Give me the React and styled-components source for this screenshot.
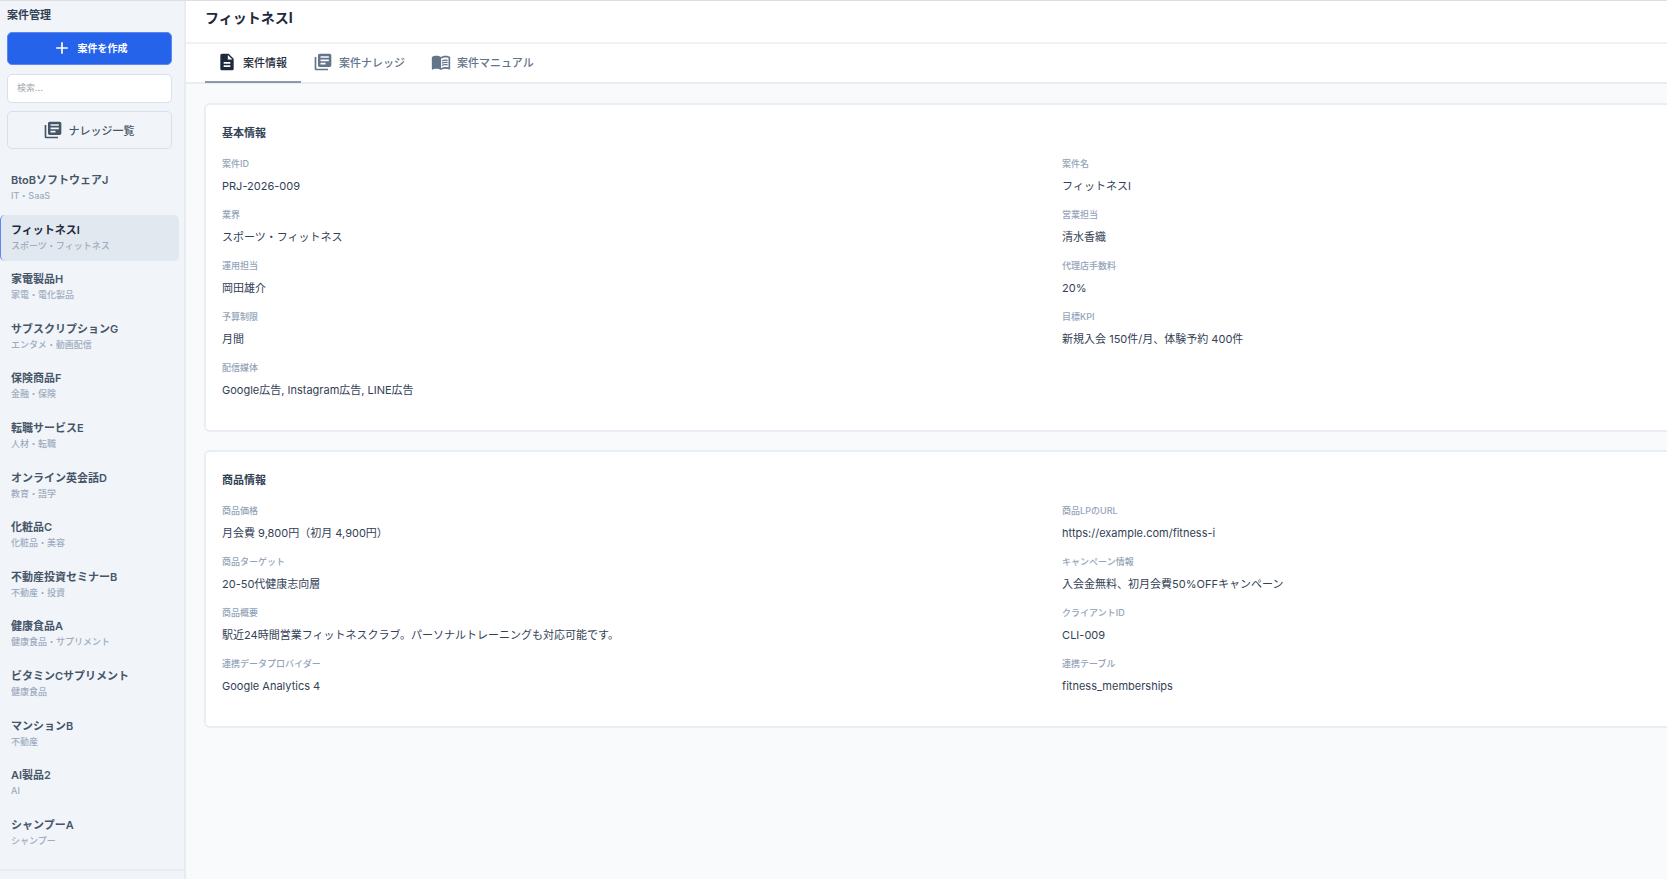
import styled, { createGlobalStyle } from "styled-components";
import {
  MdAdd,
  MdDescription,
  MdLibraryBooks,
  MdMenuBook,
} from "react-icons/md";

const GlobalStyle = createGlobalStyle`
  * {
    box-sizing: border-box;
  }

  body {
    margin: 0;
    background-color: #f8fafc;
    color: #334155;
    font-family: Inter, "Noto Sans CJK JP", sans-serif;
    font-size: 11px;
  }

  button,
  input {
    font-family: inherit;
  }
`;

const Page = styled.div`
  display: flex;
  min-height: 100vh;
  border-top: 1px solid #dcdee1;
`;

const Sidebar = styled.aside`
  display: flex;
  flex-direction: column;
  flex: 0 0 186px;
  background-color: #f1f5f9;
  border-right: 2px solid #e8ecf1;
`;

const SidebarTop = styled.div`
  display: flex;
  flex-direction: column;
  padding: 6px 12px 0 7px;
`;

const SidebarTitle = styled.h2`
  margin: 0 0 8px;
  font-size: 11px;
  line-height: 17px;
  font-weight: 700;
`;

const CreateButton = styled.button`
  display: flex;
  align-items: center;
  justify-content: center;
  gap: 6px;
  height: 33px;
  padding: 0 0 2px;
  border: 1px solid #5b87ef;
  border-radius: 5px;
  background-color: #2563eb;
  color: #fff;
  font-size: 10px;
  font-weight: 700;

  svg {
    font-size: 20px;
  }
`;

const SearchInput = styled.input`
  width: 100%;
  height: 29px;
  margin: 9px 0 8px;
  padding: 0 9px 2px;
  border: 1px solid #d8e0e9;
  border-radius: 5px;
  background-color: #fff;
  font-size: 9px;

  &::placeholder {
    color: #a3a8b0;
  }
`;

const KnowledgeButton = styled.button`
  display: flex;
  align-items: center;
  justify-content: center;
  gap: 6px;
  height: 38px;
  padding: 0 2px 0 0;
  border: 1px solid #d8e0e9;
  border-radius: 5px;
  background-color: transparent;
  color: #475569;
  font-size: 11px;
  font-weight: 500;

  svg {
    font-size: 20px;
  }
`;

const ProjectList = styled.ul`
  display: flex;
  flex: 1;
  flex-direction: column;
  justify-content: space-between;
  gap: 3px;
  margin: 0;
  padding: 16px 5px 13px 0;
  list-style: none;
`;

const ProjectLink = styled.a`
  display: block;
  height: 46px;
  padding: 7px 10px;
  border-left: 1px solid ${(props) => (props.$active ? "#5f86ee" : "transparent")};
  border-radius: 5px;
  background-color: ${(props) => (props.$active ? "#e2e8f0" : "transparent")};
  color: ${(props) => (props.$active ? "#1e293b" : "#475569")};
  font-size: 11px;
  font-weight: 600;
  line-height: 17px;
  text-decoration: none;
`;

const Industry = styled.span`
  display: block;
  color: #a0acc0;
  font-size: 9px;
  font-weight: 500;
  line-height: 14px;
`;

const SidebarFooter = styled.div`
  height: 10px;
  border-top: 2px solid #e8ecf1;
`;

const Main = styled.main`
  flex: 1;
  min-width: 0;
`;

const Header = styled.header`
  height: 43px;
  padding: 5px 19px;
  border-bottom: 2px solid #eef1f6;
  background-color: #fff;
`;

const Title = styled.h1`
  margin: 0;
  color: #1e293b;
  font-size: 14px;
  font-weight: 700;
  line-height: 23px;
`;

const Tabs = styled.nav`
  display: flex;
  height: 40px;
  padding: 0 19px;
  border-bottom: 2px solid #e9edf3;
  background-color: #fff;
`;

const Tab = styled.button`
  display: flex;
  align-items: center;
  gap: 6px;
  margin-bottom: -1px;
  padding: 0 14px 2px 12px;
  border: 0;
  border-bottom: 2px solid ${(props) => (props.$active ? "#8d97a7" : "transparent")};
  background: none;
  color: ${(props) => (props.$active ? "#1e293b" : "#64748b")};
  font-size: 11px;
  font-weight: 500;

  svg {
    font-size: 20px;
  }
`;

const Content = styled.div`
  display: flex;
  flex-direction: column;
  gap: 18px;
  padding: 19px 0 19px 18px;
`;

const Card = styled.section`
  padding: 18px 0 19px 16px;
  border: 2px solid #e9eef4;
  border-right: 0;
  border-radius: 6px 0 0 6px;
  background-color: #fff;
`;

const CardTitle = styled.h3`
  margin: 0 0 13px;
  color: #334155;
  font-size: 11px;
  font-weight: 700;
  line-height: 20px;
`;

const Fields = styled.dl`
  display: grid;
  grid-template-columns: 25fr 18fr;
  margin: 0;
`;

const Field = styled.div`
  height: 51px;

  dt {
    color: #94a3b8;
    font-size: 9px;
    font-weight: 500;
    line-height: 15px;
  }

  dd {
    margin: 5px 0 0;
    color: #334155;
    font-size: 11px;
    line-height: 20px;
  }
`;

const projects = [
  { name: "BtoBソフトウェアJ", industry: "IT・SaaS" },
  { name: "フィットネスI", industry: "スポーツ・フィットネス", active: true },
  { name: "家電製品H", industry: "家電・電化製品" },
  { name: "サブスクリプションG", industry: "エンタメ・動画配信" },
  { name: "保険商品F", industry: "金融・保険" },
  { name: "転職サービスE", industry: "人材・転職" },
  { name: "オンライン英会話D", industry: "教育・語学" },
  { name: "化粧品C", industry: "化粧品・美容" },
  { name: "不動産投資セミナーB", industry: "不動産・投資" },
  { name: "健康食品A", industry: "健康食品・サプリメント" },
  { name: "ビタミンCサプリメント", industry: "健康食品" },
  { name: "マンションB", industry: "不動産" },
  { name: "AI製品2", industry: "AI" },
  { name: "シャンプーA", industry: "シャンプー" },
];

const tabs = [
  { label: "案件情報", Icon: MdDescription, active: true },
  { label: "案件ナレッジ", Icon: MdLibraryBooks },
  { label: "案件マニュアル", Icon: MdMenuBook },
];

const sections = [
  {
    title: "基本情報",
    fields: [
      ["案件ID", "PRJ-2026-009"],
      ["案件名", "フィットネスI"],
      ["業界", "スポーツ・フィットネス"],
      ["営業担当", "清水香織"],
      ["運用担当", "岡田雄介"],
      ["代理店手数料", "20%"],
      ["予算制限", "月間"],
      ["目標KPI", "新規入会 150件/月、体験予約 400件"],
      ["配信媒体", "Google広告, Instagram広告, LINE広告"],
    ],
  },
  {
    title: "商品情報",
    fields: [
      ["商品価格", "月会費 9,800円（初月 4,900円）"],
      ["商品LPのURL", "https://example.com/fitness-i"],
      ["商品ターゲット", "20-50代健康志向層"],
      ["キャンペーン情報", "入会金無料、初月会費50%OFFキャンペーン"],
      ["商品概要", "駅近24時間営業フィットネスクラブ。パーソナルトレーニングも対応可能です。"],
      ["クライアントID", "CLI-009"],
      ["連携データプロバイダー", "Google Analytics 4"],
      ["連携テーブル", "fitness_memberships"],
    ],
  },
];

export default function App() {
  return (
    <>
      <GlobalStyle />
      <Page lang="ja">
        <Sidebar>
          <SidebarTop>
            <SidebarTitle>案件管理</SidebarTitle>
            <CreateButton type="button">
              <MdAdd />
              案件を作成
            </CreateButton>
            <SearchInput type="search" placeholder="検索..." aria-label="検索" />
            <KnowledgeButton type="button">
              <MdLibraryBooks />
              ナレッジ一覧
            </KnowledgeButton>
          </SidebarTop>
          <ProjectList>
            {projects.map((project) => (
              <li key={project.name}>
                <ProjectLink href="#" $active={project.active}>
                  {project.name}
                  <Industry>{project.industry}</Industry>
                </ProjectLink>
              </li>
            ))}
          </ProjectList>
          <SidebarFooter />
        </Sidebar>
        <Main>
          <Header>
            <Title>フィットネスI</Title>
          </Header>
          <Tabs>
            {tabs.map(({ label, Icon, active }) => (
              <Tab key={label} type="button" $active={active}>
                <Icon />
                {label}
              </Tab>
            ))}
          </Tabs>
          <Content>
            {sections.map((section) => (
              <Card key={section.title}>
                <CardTitle>{section.title}</CardTitle>
                <Fields>
                  {section.fields.map(([label, value]) => (
                    <Field key={label}>
                      <dt>{label}</dt>
                      <dd>{value}</dd>
                    </Field>
                  ))}
                </Fields>
              </Card>
            ))}
          </Content>
        </Main>
      </Page>
    </>
  );
}
